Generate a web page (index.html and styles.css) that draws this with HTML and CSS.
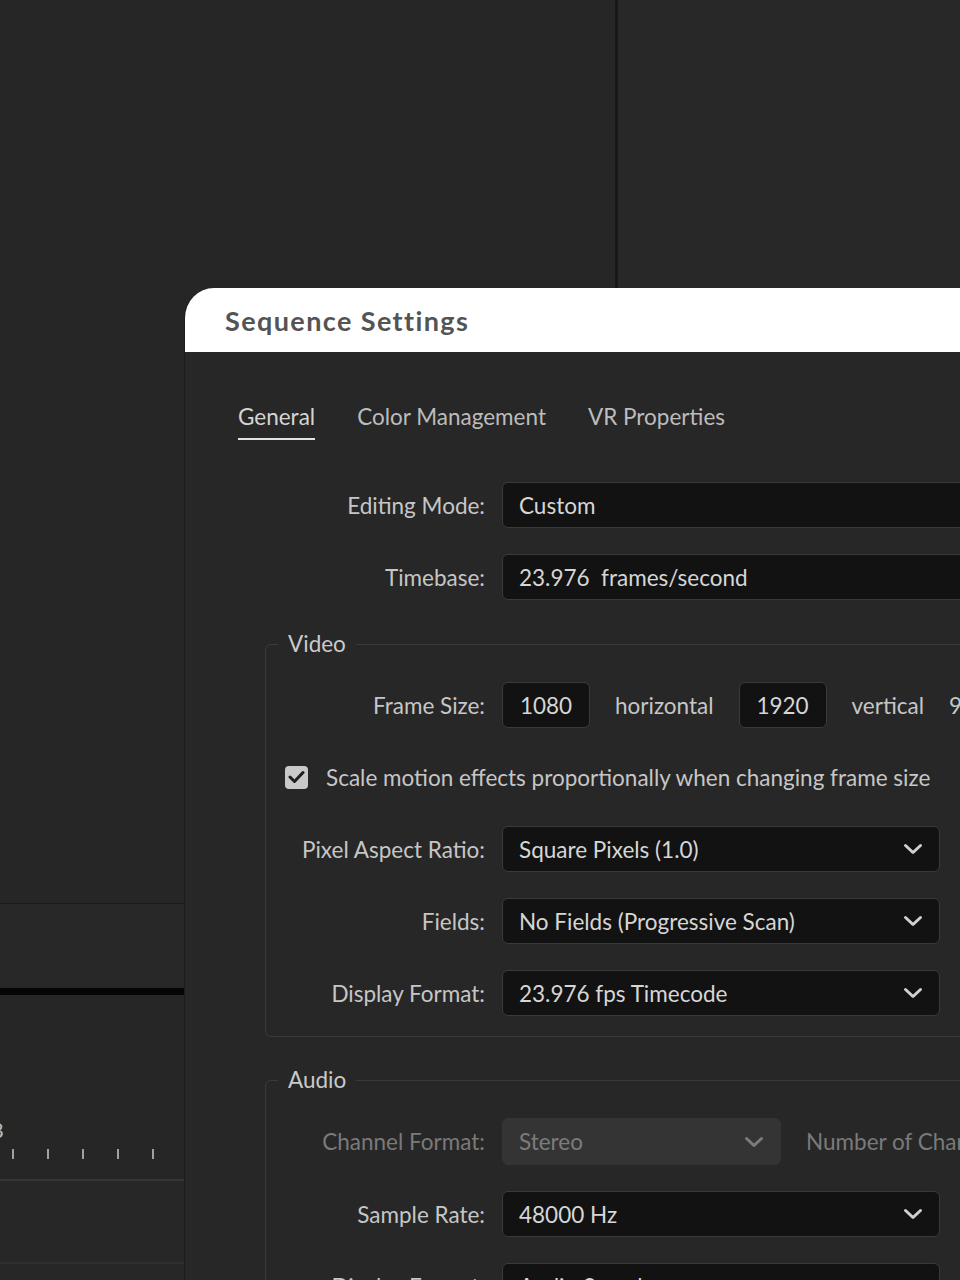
FILE: index.html
```html
<!DOCTYPE html>
<html lang="en">

<head>
    <meta charset="UTF-8">
    <meta name="viewport" content="width=device-width, initial-scale=1.0">
    <title>Sequence Settings</title>
    <link rel="stylesheet" href="styles.css">
</head>

<body>
    <div class="workspace">
        <div class="pane-left">
            <div class="monitor"></div>
            <div class="timeline-head"></div>
            <div class="timeline-bar"></div>
            <div class="ruler">
                <span class="ruler-num">8</span>
                <div class="ticks"><i></i><i></i><i></i><i></i><i></i></div>
            </div>
            <div class="track"></div>
            <div class="track"></div>
        </div>
        <div class="divider"></div>
        <div class="pane-right"></div>
    </div>

    <div class="dialog">
        <div class="dialog-title">Sequence Settings</div>

        <div class="tabs">
            <div class="tab active">General</div>
            <div class="tab">Color Management</div>
            <div class="tab">VR Properties</div>
        </div>

        <div class="form">
            <div class="row">
                <label class="row-label">Editing Mode:</label>
                <div class="field wide">Custom</div>
            </div>
            <div class="row">
                <label class="row-label">Timebase:</label>
                <div class="field wide">23.976&nbsp; frames/second</div>
            </div>

            <fieldset class="group">
                <legend>Video</legend>
                <div class="row">
                    <label class="row-label">Frame Size:</label>
                    <div class="frame-size">
                        <div class="field small">1080</div>
                        <span>horizontal</span>
                        <div class="field small">1920</div>
                        <span>vertical</span>
                        <span>9:16</span>
                    </div>
                </div>
                <div class="row check-row">
                    <span class="checkbox">
                        <svg width="17" height="14" viewBox="0 0 17 14"><polyline points="2,7 6.5,11.5 15,2.5" fill="none" stroke="#1e1e1e" stroke-width="3" stroke-linecap="round" stroke-linejoin="round"/></svg>
                    </span>
                    <span>Scale motion effects proportionally when changing frame size</span>
                </div>
                <div class="row">
                    <label class="row-label">Pixel Aspect Ratio:</label>
                    <div class="field select">Square Pixels (1.0)
                        <svg class="chevron" width="20" height="12" viewBox="0 0 20 12"><polyline points="2.5,2.5 10,9.5 17.5,2.5" fill="none" stroke="currentColor" stroke-width="3" stroke-linecap="round" stroke-linejoin="round"/></svg>
                    </div>
                </div>
                <div class="row">
                    <label class="row-label">Fields:</label>
                    <div class="field select">No Fields (Progressive Scan)
                        <svg class="chevron" width="20" height="12" viewBox="0 0 20 12"><polyline points="2.5,2.5 10,9.5 17.5,2.5" fill="none" stroke="currentColor" stroke-width="3" stroke-linecap="round" stroke-linejoin="round"/></svg>
                    </div>
                </div>
                <div class="row">
                    <label class="row-label">Display Format:</label>
                    <div class="field select">23.976 fps Timecode
                        <svg class="chevron" width="20" height="12" viewBox="0 0 20 12"><polyline points="2.5,2.5 10,9.5 17.5,2.5" fill="none" stroke="currentColor" stroke-width="3" stroke-linecap="round" stroke-linejoin="round"/></svg>
                    </div>
                </div>
            </fieldset>

            <fieldset class="group audio">
                <legend>Audio</legend>
                <div class="row channel-row">
                    <label class="row-label disabled">Channel Format:</label>
                    <div class="field select disabled">Stereo
                        <svg class="chevron" width="20" height="12" viewBox="0 0 20 12"><polyline points="2.5,2.5 10,9.5 17.5,2.5" fill="none" stroke="currentColor" stroke-width="3" stroke-linecap="round" stroke-linejoin="round"/></svg>
                    </div>
                    <span class="row-extra disabled">Number of Channels:</span>
                </div>
                <div class="row">
                    <label class="row-label">Sample Rate:</label>
                    <div class="field select">48000 Hz
                        <svg class="chevron" width="20" height="12" viewBox="0 0 20 12"><polyline points="2.5,2.5 10,9.5 17.5,2.5" fill="none" stroke="currentColor" stroke-width="3" stroke-linecap="round" stroke-linejoin="round"/></svg>
                    </div>
                </div>
                <div class="row">
                    <label class="row-label">Display Format:</label>
                    <div class="field select">Audio Samples
                        <svg class="chevron" width="20" height="12" viewBox="0 0 20 12"><polyline points="2.5,2.5 10,9.5 17.5,2.5" fill="none" stroke="currentColor" stroke-width="3" stroke-linecap="round" stroke-linejoin="round"/></svg>
                    </div>
                </div>
            </fieldset>
        </div>
    </div>
</body>

</html>
```

FILE: styles.css
```css
body {
    margin: 0;
    padding: 0;
    height: 1280px;
    overflow: hidden;
    background-color: #262626;
    font-family: Lato, "Liberation Sans", sans-serif;
    color: #c8c8c8;
}

.workspace {
    display: grid;
    grid-template-columns: 615px 3px 1fr;
    height: 1280px;
}

.pane-left {
    display: flex;
    flex-direction: column;
}

.monitor {
    height: 903px;
    border-bottom: 1px solid #1b1b1b;
    background-color: #262626;
}

.timeline-head {
    height: 84px;
    background-color: #282828;
}

.timeline-bar {
    height: 7px;
    background-color: #050505;
}

.ruler {
    height: 184px;
    display: flex;
    flex-direction: column;
    justify-content: flex-end;
    background-color: #262626;
    border-bottom: 2px solid #363636;
}

.ruler-num {
    font-size: 22px;
    color: #bbb;
    margin-left: -9px;
    line-height: 24px;
}

.ticks {
    display: flex;
    gap: 33px;
    padding: 7px 0 20px 12px;
}

.ticks i {
    width: 2px;
    height: 10px;
    background-color: #a0a0a0;
}

.track {
    height: 81px;
    border-bottom: 2px solid #303030;
    background-color: #272727;
}

.divider {
    background-color: #181818;
}

.pane-right {
    background-color: #282828;
}

/* dialog */

.dialog {
    position: absolute;
    left: 184px;
    top: 288px;
    width: 900px;
    height: 1100px;
    border-radius: 30px 0 0 0;
    border-left: 1px solid #1c1c1c;
    background-color: #272727;
    overflow: hidden;
}

.dialog-title {
    height: 64px;
    padding-left: 40px;
    display: flex;
    align-items: center;
    background-color: #fff;
    color: #545454;
    font-size: 27px;
    font-weight: bold;
    letter-spacing: 1.4px;
}

.tabs {
    display: flex;
    align-items: flex-start;
    gap: 42px;
    padding: 50px 0 0 53px;
}

.tab {
    font-size: 22.5px;
    line-height: 30px;
    padding-bottom: 6px;
    color: #bcbcbc;
}

.tab.active {
    color: #d4d4d4;
    border-bottom: 2px solid #e2e2e2;
}

.form {
    padding-top: 42px;
}

.row {
    display: flex;
    align-items: center;
    height: 46px;
    margin-bottom: 26px;
    font-size: 22.5px;
}

.row-label {
    flex: none;
    width: 300px;
    margin-right: 17px;
    text-align: right;
    color: #c6c6c6;
}

.field {
    box-sizing: border-box;
    height: 46px;
    display: flex;
    align-items: center;
    padding-left: 16px;
    background-color: #121212;
    border: 1px solid #3a3a3a;
    border-radius: 6px;
    color: #d6d6d6;
}

.field.wide {
    width: 520px;
}

.field.small {
    width: 88px;
    padding-left: 0;
    justify-content: center;
}

.field.select {
    width: 438px;
    justify-content: space-between;
    padding-right: 16px;
}

.chevron {
    color: #d0d0d0;
}

.frame-size {
    display: flex;
    align-items: center;
    gap: 25px;
    white-space: nowrap;
    color: #c6c6c6;
}

.group {
    width: 800px;
    margin: 29px 0 0 80px;
    padding: 23px 0 20px 0;
    border: 1px solid #3a3a3a;
    border-radius: 6px;
}

.group + .group {
    margin-top: 28px;
}

.group legend {
    margin-left: 12px;
    padding: 0 10px;
    font-size: 22.5px;
    line-height: 30px;
    color: #cacaca;
}

.group .row-label {
    width: 219px;
}

.group .row:last-child {
    margin-bottom: 0;
}

.check-row {
    padding-left: 19px;
    gap: 18px;
    color: #c6c6c6;
}

.checkbox {
    width: 23px;
    height: 23px;
    border-radius: 4px;
    background-color: #c9c9c9;
    display: flex;
    align-items: center;
    justify-content: center;
}

.row-label.disabled,
.row-extra.disabled {
    color: #7a7a7a;
}

.channel-row {
    height: 47px;
}

.field.select.disabled {
    width: 279px;
    height: 47px;
    background-color: #343434;
    border-color: #343434;
    color: #7c7c7c;
}

.field.select.disabled .chevron {
    color: #7c7c7c;
}

.row-extra {
    margin-left: 25px;
    white-space: nowrap;
}
```
